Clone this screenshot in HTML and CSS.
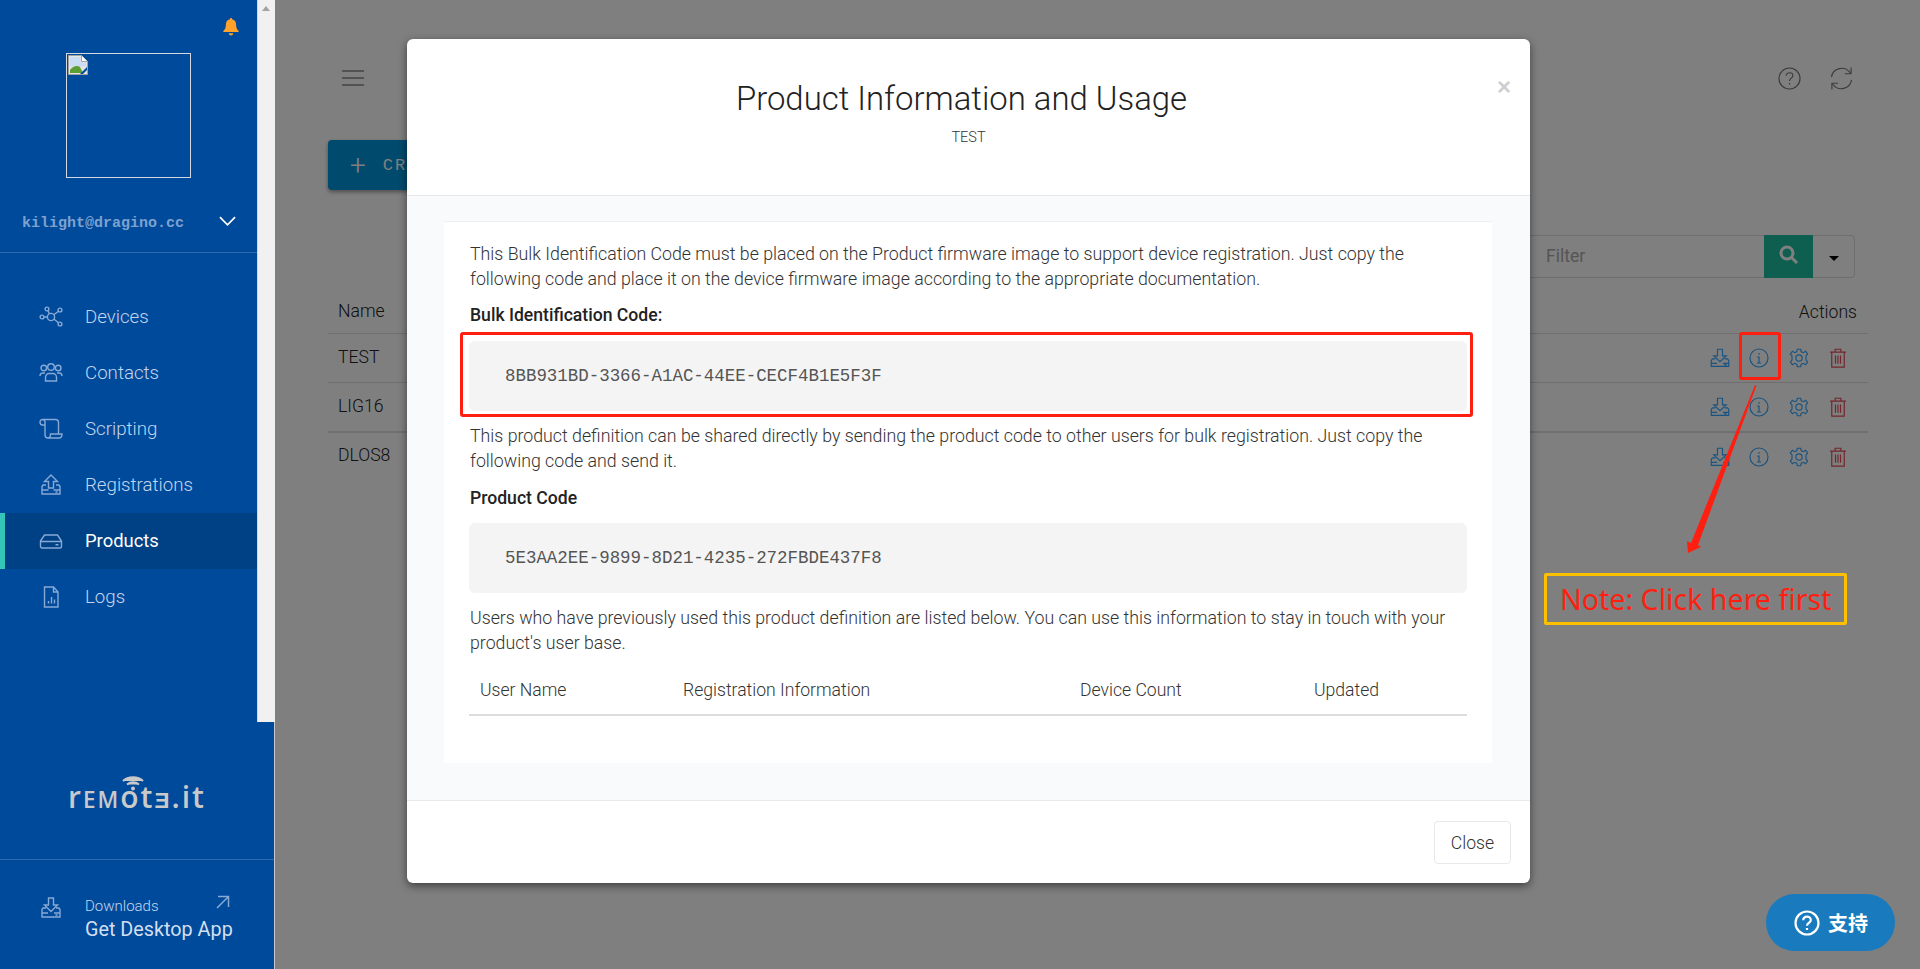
FILE: index.html
```html
<!DOCTYPE html>
<html lang="en">
<head>
<meta charset="utf-8">
<title>Products</title>
<link rel="stylesheet" href="styles.css">
</head>
<body>
<div class="app">
  <aside class="sidebar">
    <div class="side-top">
      <div class="side-content">
        <div class="bell-row">
          <svg class="bell" viewBox="0 0 16 18"><path d="M8 0c.7 0 1.1.5 1.1 1.2 2.700.5 4 2.700 4 5.300 0 3.500 1 4.800 2.400 6.200.5.500.2 1.300-.5 1.300H1c-.7 0-1-.8-.5-1.300C1.900 11.300 2.900 10 2.900 6.500c0-2.600 1.300-4.800 4-5.300C6.900.5 7.300 0 8 0zM5.800 15.200h4.400C10.200 16.500 9.200 17.500 8 17.500s-2.200-1-2.200-2.300z"/></svg>
        </div>
        <div class="avatar">
          <svg class="broken" viewBox="0 0 20 20"><path class="b-page" d="M.5.500h13l6 6v13H.5z"/><path class="b-fold" d="M13.500.500v6h6"/><path class="b-sky" d="M2 2h10.500v5.500H18v4H2z"/><path class="b-hill" d="M2 18v-3c3-4 7-5 10-3l3 6z"/><path class="b-slash" d="M12 19l7-7v3l-4 4z"/></svg>
        </div>
        <div class="user-row">
          <span class="email">kilight@dragino.cc</span>
          <svg class="chev" viewBox="0 0 18 10"><path d="M1 1l8 8 8-8"/></svg>
        </div>
        <nav class="nav">
          <a class="nav-item"><svg class="nav-ico" viewBox="0 0 24 24"><circle cx="12" cy="12" r="3.600"/><circle cx="8" cy="4" r="1.900"/><circle cx="21" cy="5" r="1.900"/><circle cx="21" cy="19" r="1.900"/><circle cx="3" cy="12" r="1.900"/><path d="M9 5.800l1.300 3M19.500 6.300l-4.700 3.500M19.500 17.700l-4.700-3.700M5 12h3.400"/></svg><span>Devices</span></a>
          <a class="nav-item"><svg class="nav-ico" viewBox="0 0 24 24"><circle cx="4.800" cy="7" r="2.800"/><circle cx="12" cy="6" r="3.300"/><circle cx="19.200" cy="7" r="2.800"/><path d="M1 15c0-2 1.200-3 3-3h2M23 15c0-2-1.200-3-3-3h-2M6.500 20v-3.500c0-2.200 1.500-4 3.500-4h4c2 0 3.500 1.800 3.500 4V20z"/></svg><span>Contacts</span></a>
          <a class="nav-item"><svg class="nav-ico" viewBox="0 0 24 24"><path d="M6 8V5a2.500 2.500 0 0 0-2.500-2.500h13A3 3 0 0 1 19.500 5.500V17M3.500 2.500A2.500 2.500 0 0 0 1 5c0 1.500 1 3 2.500 3H6M6 5v13a3 3 0 0 0 3 3h11c2 0 3-1.500 3-4H11.500c0 2.500-1 4-2.500 4"/></svg><span>Scripting</span></a>
          <a class="nav-item"><svg class="nav-ico" viewBox="0 0 24 24"><path d="M9.500 15V8.500H5.500L12 2l6.500 6.500h-4V15zM7 12H4L3 13.500V21h18v-7.500L20 12h-3M3 17h6.500M14.500 17H21M16.500 19h2"/></svg><span>Registrations</span></a>
          <a class="nav-item active"><svg class="nav-ico" viewBox="0 0 24 24"><path d="M1.500 12l4-6h13l4 6v5.500a1.500 1.500 0 0 1-1.500 1.500H3a1.500 1.500 0 0 1-1.500-1.500zM1.500 12.500h21M16.500 15.800h3"/></svg><span>Products</span></a>
          <a class="nav-item"><svg class="nav-ico" viewBox="0 0 24 24"><path d="M5.500 2h9l4.500 5v15H5.500zM14.500 2v5H19M9.500 18.500v-2.500M12.500 18.500v-6.500M15.500 18.500v-4"/></svg><span>Logs</span></a>
        </nav>
      </div>
      <div class="scrollbar"><span class="scroll-arrow"></span></div>
    </div>
    <div class="side-bottom">
      <div class="logo">
        <svg class="logo-wifi" viewBox="0 0 22 15"><path d="M1 5c5-5 15-5 20 0M5 8.500c3.500-3 8.500-3 12 0"/><circle cx="11" cy="12.500" r="2"/></svg>
        <span class="logo-text">r<span class="logo-caps">EM</span>ot<span class="logo-caps">Ǝ</span>.it</span>
      </div>
      <a class="download">
        <svg class="nav-ico" viewBox="0 0 24 24"><path d="M9.500 2v7H5.500l6.500 6.500L18.500 9h-4V2zM7 12H4L3 13.500V21h18v-7.500L20 12h-3M3 17h6M15 17h6M16.500 19h2"/></svg>
        <span class="dl-text"><span class="dl-small">Downloads</span><span class="dl-big">Get Desktop App</span></span>
        <svg class="dl-arrow" viewBox="0 0 14 14"><path d="M1 13L12.500 1.500M2 1.500h10.500V12"/></svg>
      </a>
    </div>
  </aside>

  <main class="main">
    <div class="topbar">
      <svg class="burger" viewBox="0 0 22 16"><path d="M0 1h22M0 8h22M0 15h22"/></svg>
      <div class="top-icons">
        <svg class="top-ico" viewBox="0 0 24 24"><circle cx="12" cy="12" r="11"/><path d="M8.500 9.200c0-2 1.500-3.200 3.500-3.200s3.500 1.300 3.500 3c0 2.700-3.500 2.600-3.500 5.500M12 16.700v1.600"/></svg>
        <svg class="top-ico" viewBox="0 0 24 24"><path d="M1.500 10.500A10.800 10.800 0 0 1 21 6M22.500 13.500A10.800 10.800 0 0 1 3 18M22 .5V7h-6.500M2 23.500V17h6.500"/></svg>
      </div>
    </div>
    <button class="create"><span class="plus">+</span>CREATE PRODUCT</button>
    <div class="filter-row">
      <div class="filter">
        <span class="filter-text">Filter</span>
        <span class="search-btn"><svg class="search-ico" viewBox="0 0 20 20"><circle cx="8" cy="8" r="6"/><path d="M12.500 12.500L18 18"/></svg></span>
        <span class="caret-btn"><span class="caret"></span></span>
      </div>
    </div>
    <div class="table">
      <div class="t-head"><span class="t-name">Name</span><span class="t-actions">Actions</span></div>
      <div class="t-row">
        <span class="t-name">TEST</span>
        <div class="icons">
          <svg class="act blue" viewBox="0 0 24 24"><path d="M9 1.500v8H4.500l7.500 7 7.500-7H15v-8zM6.500 13H3L1.500 15v7h21v-7L21 13h-3.500M1.500 18.500h7M15.500 18.500h7M17 20.300h3"/></svg>
          <svg class="act blue" viewBox="0 0 24 24"><circle cx="12" cy="12" r="10.800"/><path d="M12 6v2M10 11h2v7M9.500 18h5"/></svg>
          <svg class="act blue" viewBox="0 0 24 24"><circle cx="12" cy="12" r="3.800"/><path d="M10 1.500h4l.7 3 2.500 1.100 2.700-1.600 2.500 3.200-2 2.300v5l2 2.300-2.500 3.200-2.700-1.600-2.500 1.100-.7 3h-4l-.7-3-2.500-1.100-2.700 1.600-2.500-3.200 2-2.300v-5l-2-2.300L4.100 4l2.700 1.600L9.300 4.500z"/></svg>
          <svg class="act red" viewBox="0 0 24 24"><path d="M2.500 5h19M8.500 5V1.500h7V5M4.500 5v18h15V5M9 9v10M12 9v10M15 9v10"/></svg>
        </div>
      </div>
      <div class="t-row">
        <span class="t-name">LIG16</span>
        <div class="icons">
          <svg class="act blue" viewBox="0 0 24 24"><path d="M9 1.500v8H4.500l7.500 7 7.500-7H15v-8zM6.500 13H3L1.500 15v7h21v-7L21 13h-3.500M1.500 18.500h7M15.500 18.500h7M17 20.300h3"/></svg>
          <svg class="act blue" viewBox="0 0 24 24"><circle cx="12" cy="12" r="10.800"/><path d="M12 6v2M10 11h2v7M9.500 18h5"/></svg>
          <svg class="act blue" viewBox="0 0 24 24"><circle cx="12" cy="12" r="3.800"/><path d="M10 1.500h4l.7 3 2.500 1.100 2.700-1.600 2.500 3.200-2 2.300v5l2 2.300-2.500 3.200-2.700-1.600-2.500 1.100-.7 3h-4l-.7-3-2.500-1.100-2.700 1.600-2.500-3.200 2-2.300v-5l-2-2.300L4.100 4l2.700 1.600L9.300 4.500z"/></svg>
          <svg class="act red" viewBox="0 0 24 24"><path d="M2.500 5h19M8.500 5V1.500h7V5M4.500 5v18h15V5M9 9v10M12 9v10M15 9v10"/></svg>
        </div>
      </div>
      <div class="t-row">
        <span class="t-name">DLOS8</span>
        <div class="icons">
          <svg class="act blue" viewBox="0 0 24 24"><path d="M9 1.500v8H4.500l7.500 7 7.500-7H15v-8zM6.500 13H3L1.500 15v7h21v-7L21 13h-3.500M1.500 18.500h7M15.500 18.500h7M17 20.300h3"/></svg>
          <svg class="act blue" viewBox="0 0 24 24"><circle cx="12" cy="12" r="10.800"/><path d="M12 6v2M10 11h2v7M9.500 18h5"/></svg>
          <svg class="act blue" viewBox="0 0 24 24"><circle cx="12" cy="12" r="3.800"/><path d="M10 1.500h4l.7 3 2.500 1.100 2.700-1.600 2.500 3.200-2 2.300v5l2 2.300-2.500 3.200-2.700-1.600-2.500 1.100-.7 3h-4l-.7-3-2.500-1.100-2.700 1.600-2.500-3.200 2-2.300v-5l-2-2.300L4.100 4l2.700 1.600L9.300 4.500z"/></svg>
          <svg class="act red" viewBox="0 0 24 24"><path d="M2.500 5h19M8.500 5V1.500h7V5M4.500 5v18h15V5M9 9v10M12 9v10M15 9v10"/></svg>
        </div>
      </div>
    </div>
    <div class="backdrop"></div>
  </main>
</div>

<section class="modal">
  <header class="modal-head">
    <h1 class="modal-title">Product Information and Usage</h1>
    <div class="modal-sub">TEST</div>
    <span class="modal-x">×</span>
  </header>
  <div class="modal-body">
    <div class="card">
      <p class="para">This Bulk Identification Code must be placed on the Product firmware image to support device registration. Just copy the following code and place it on the device firmware image according to the appropriate documentation.</p>
      <div class="label label-first">Bulk Identification Code:</div>
      <pre class="code">8BB931BD-3366-A1AC-44EE-CECF4B1E5F3F</pre>
      <p class="para">This product definition can be shared directly by sending the product code to other users for bulk registration. Just copy the following code and send it.</p>
      <div class="label">Product Code</div>
      <pre class="code">5E3AA2EE-9899-8D21-4235-272FBDE437F8</pre>
      <p class="para">Users who have previously used this product definition are listed below. You can use this information to stay in touch with your product's user base.</p>
      <div class="users">
        <span>User Name</span><span>Registration Information</span><span>Device Count</span><span>Updated</span>
      </div>
    </div>
  </div>
  <footer class="modal-foot"><button class="close-btn">Close</button></footer>
</section>

<div class="mark mark-code"></div>
<div class="mark mark-info"></div>
<svg class="arrow" viewBox="0 0 80 175"><polygon points="67,0 68.500,.5 10,160 13,162 0,168 -1,156 3,158"/></svg>
<div class="note">Note: Click here first</div>

<button class="support">
  <svg class="support-ico" viewBox="0 0 26 26"><circle cx="13" cy="13" r="11.500"/><path d="M9.200 10.300c0-2.300 1.700-3.600 3.800-3.600s3.800 1.400 3.800 3.300c0 2.900-3.800 2.900-3.800 5.700M13 18v2"/></svg>
  <span>支持</span>
</button>
</body>
</html>
```

FILE: styles.css
```css
* { box-sizing: border-box; }
html, body { margin: 0; height: 969px; overflow: hidden; background: #fff; }
body { font-family: Roboto, "Liberation Sans", sans-serif; font-size: 17.6px; color: #333; }
svg { display: block; }

.app { display: flex; height: 969px; }

/* Sidebar */
.sidebar { position: relative; z-index: 5; width: 275px; flex: none; display: flex; flex-direction: column; background: #004a9b; }
.side-top { display: flex; height: 722px; }
.side-content { width: 257px; flex: none; }
.scrollbar { width: 18px; background: #f1f1f1; padding: 6px 0 0 4px; border-left: 1px solid #cfd8e6; }
.scroll-arrow { display: block; width: 0; height: 0; border-left: 4px solid transparent; border-right: 4px solid transparent; border-bottom: 5px solid #a3a3a3; }
.bell-row { display: flex; justify-content: flex-end; padding: 18px 18px 0 0; height: 53px; }
.bell { width: 16px; height: 18px; fill: #ffa12b; }
.avatar { width: 125px; height: 125px; margin-left: 66px; border: 1px solid #d4d8de; padding: 1px; }
.broken { width: 20px; height: 20px; }
.b-page { fill: #e4e4e4; stroke: #a0a0a0; }
.b-fold { fill: #fff; stroke: #a0a0a0; }
.b-sky { fill: #c9dcf3; }
.b-hill { fill: #5a9e34; }
.b-slash { fill: #004a9b; }
.user-row { display: flex; align-items: center; justify-content: space-between; padding: 16px 21px 0 22px; height: 75px; border-bottom: 1px solid #2f69ae; }
.email { font-family: "Liberation Mono", monospace; font-size: 15px; font-weight: 700; color: #7ea1cf; }
.chev { width: 17px; height: 10px; fill: none; stroke: #fff; stroke-width: 1.800; margin-top: -4px; }
.nav { padding-top: 36px; }
.nav-item { display: flex; align-items: center; gap: 22px; height: 56px; padding-left: 39px; font-size: 18.7px; font-weight: 300; color: #c3d6ee; }
.nav-item.active { background: #004084; color: #fff; font-weight: 400; font-size: 18.4px; box-shadow: inset 5px 0 0 #33c6b8; }
.nav-item.active span { margin-top: -2px; }
.nav-ico { width: 24px; height: 24px; flex: none; fill: none; stroke: #86a9d6; stroke-width: 1.400; }
.side-bottom { flex: 1; border-right: 1px solid #c8c8c8; display: flex; flex-direction: column; }
.logo { height: 138px; padding-top: 57px; position: relative; display: flex; justify-content: center; border-bottom: 1px solid #2f69ae; }
.logo-text { font-family: "Open Sans", sans-serif; font-size: 30px; font-weight: 600; line-height: 36px; letter-spacing: 2px; color: #c9c9c9; }
.logo-caps { font-size: 22.500px; }
.logo-wifi { position: absolute; left: 122px; top: 54px; width: 22px; height: 15px; fill: #c9c9c9; stroke: #c9c9c9; stroke-width: 2; }
.logo-wifi circle { stroke: none; }
.download { display: flex; position: relative; padding: 36px 0 0 39px; gap: 22px; }
.dl-text { display: flex; flex-direction: column; }
.dl-small { font-size: 15px; line-height: 20px; font-weight: 300; color: #c3d6ee; }
.dl-big { font-size: 19.8px; line-height: 27px; color: #d3dff0; }
.dl-arrow { position: absolute; left: 216px; top: 35px; width: 14px; height: 14px; fill: none; stroke: #86a9d6; stroke-width: 1.500; }

/* Main behind the dialog */
.main { position: relative; flex: 1; padding: 0 52px 0 53px; }
.backdrop { position: absolute; inset: 0; background: rgba(0, 0, 0, .5); }
.topbar { display: flex; align-items: center; justify-content: space-between; height: 32px; margin-top: 62px; padding-right: 15px; }
.burger { width: 22px; height: 16px; margin-left: 14px; stroke: #888; stroke-width: 1.300; fill: none; }
.top-icons { display: flex; gap: 29px; }
.top-ico { width: 23px; height: 23px; fill: none; stroke: #777; stroke-width: 1.200; }
.create { display: flex; align-items: center; height: 50px; width: 230px; margin-top: 46px; padding: 0 0 0 22px; border: 0; border-radius: 4px; background: #0094da; color: #fff; font-family: "Liberation Mono", monospace; font-size: 17px; letter-spacing: 2px; box-shadow: 0 2px 4px rgba(0,0,0,.4); }
.plus { font-family: Roboto, sans-serif; font-size: 28px; font-weight: 300; margin-right: 15px; }
.filter-row { display: flex; justify-content: flex-end; margin-top: 45px; padding-right: 13px; }
.filter { display: flex; align-items: stretch; width: 400px; height: 43px; border: 1px solid #dcdcdc; border-radius: 4px; }
.filter-text { flex: 1; padding-left: 90px; line-height: 41px; color: #aaa; font-weight: 400; }
.search-btn { display: flex; align-items: center; justify-content: center; width: 49px; margin: -1px 0; background: #1cbf9f; }
.search-ico { width: 20px; height: 20px; fill: none; stroke: #fff; stroke-width: 3; margin-top: -3px; }
.caret-btn { display: flex; align-items: center; justify-content: center; width: 41px; }
.caret { width: 0; height: 0; border-left: 5px solid transparent; border-right: 5px solid transparent; border-top: 5px solid #000; margin-top: 3px; }
.table { margin-top: 12px; }
.t-head { display: flex; justify-content: space-between; align-items: center; height: 44px; padding: 0 11px 0 10px; border-bottom: 1px solid #dedede; font-weight: 300; color: #222; }
.t-head .t-name { margin-top: -2px; }
.t-row { display: flex; justify-content: space-between; align-items: center; height: 49px; padding: 0 20px 0 10px; border-bottom: 1px solid #dedede; font-weight: 300; color: #222; }
.t-row .t-name { margin-top: -2px; }
.t-row:nth-child(3) { height: 50px; border-bottom-width: 2px; }
.t-row:last-child { height: 47px; border-bottom: 0; }
.t-row:last-child .t-name { margin-top: -4px; }
.icons { display: flex; gap: 19.300px; }
.act { width: 20px; height: 20px; fill: none; stroke-width: 1.400; }
.act.blue { stroke: #34a6ff; }
.act.red { stroke: #e84a58; }

/* Dialog */
.modal { position: absolute; z-index: 10; left: 407px; top: 39px; width: 1123px; height: 844px; display: flex; flex-direction: column; background: #fff; border-radius: 6px; box-shadow: 0 3px 9px rgba(0,0,0,.5); overflow: hidden; }
.modal-head { position: relative; height: 157px; flex: none; text-align: center; border-bottom: 1px solid #e5e7eb; padding-top: 37px; }
.modal-title { margin: 0; padding-right: 14px; font-size: 32.9px; line-height: 46px; font-weight: 300; color: #222; }
.modal-sub { margin-top: 6px; font-size: 14.5px; line-height: 20px; font-weight: 300; color: #333; }
.modal-x { position: absolute; right: 19px; top: 32px; font-family: "Liberation Sans", sans-serif; font-size: 24px; line-height: 32px; font-weight: 700; color: #cfcfcf; }
.modal-body { flex: 1; padding: 25px 38px 37px 37px; background: #f9fafb; }
.card { height: 100%; background: #fff; border-top: 1px solid #eeeff1; padding: 20px 25px 0; }
.para { margin: 0; padding: 0 1px; font-size: 17.76px; line-height: 25px; font-weight: 300; color: #333; }
.label { margin-top: 12.5px; padding: 0 1px; line-height: 25px; font-weight: 500; color: #222; }
.label-first { margin-top: 10.5px; margin-bottom: 13.5px; }
.code { margin: 12px 0 12.5px; height: 70px; padding: 0 36px; border-radius: 6px; background: #f4f4f4; font-family: "Liberation Mono", monospace; font-size: 17.450px; line-height: 70px; color: #555; }
.users { display: grid; grid-template-columns: 214px 397px 234px 1fr; height: 60px; padding: 22px 0 0; border-bottom: 2px solid #dcdcdc; line-height: 25px; font-weight: 300; color: #333; }
.users span:first-child { padding-left: 11px; }
.modal-foot { height: 83px; flex: none; display: flex; justify-content: flex-end; align-items: flex-start; padding: 20px 19px 0 0; border-top: 1px solid #e9e9e9; }
.close-btn { width: 77px; height: 43px; border: 1px solid #e8e8e8; border-radius: 4px; background: #fff; font-family: Roboto, sans-serif; font-size: 17.6px; font-weight: 300; color: #333; }

/* Annotations */
.mark { position: absolute; z-index: 20; border: 3px solid #ff1f10; border-radius: 3px; }
.mark-code { left: 460px; top: 332px; width: 1013px; height: 85px; }
.mark-info { left: 1739px; top: 332px; width: 42px; height: 48px; }
.arrow { position: absolute; z-index: 20; left: 1688px; top: 385px; width: 80px; height: 175px; overflow: visible; fill: #ff1f10; }
.note { position: absolute; z-index: 20; left: 1544px; top: 573px; width: 303px; height: 52px; border: 3px solid #ffc000; border-radius: 2px; padding-left: 13px; font-family: "Noto Sans", sans-serif; font-size: 28.6px; line-height: 45px; color: #ff1f10; white-space: nowrap; }

.support { position: absolute; z-index: 20; left: 1766px; top: 894px; width: 129px; height: 57px; display: flex; align-items: center; gap: 8px; padding: 0 0 0 28px; border: 0; border-radius: 29px; background: #197bbd; color: #fff; font-family: "Noto Sans CJK SC", sans-serif; font-size: 20px; font-weight: 700; }
.support-ico { width: 26px; height: 26px; fill: none; stroke: #fff; stroke-width: 2.200; }
```
